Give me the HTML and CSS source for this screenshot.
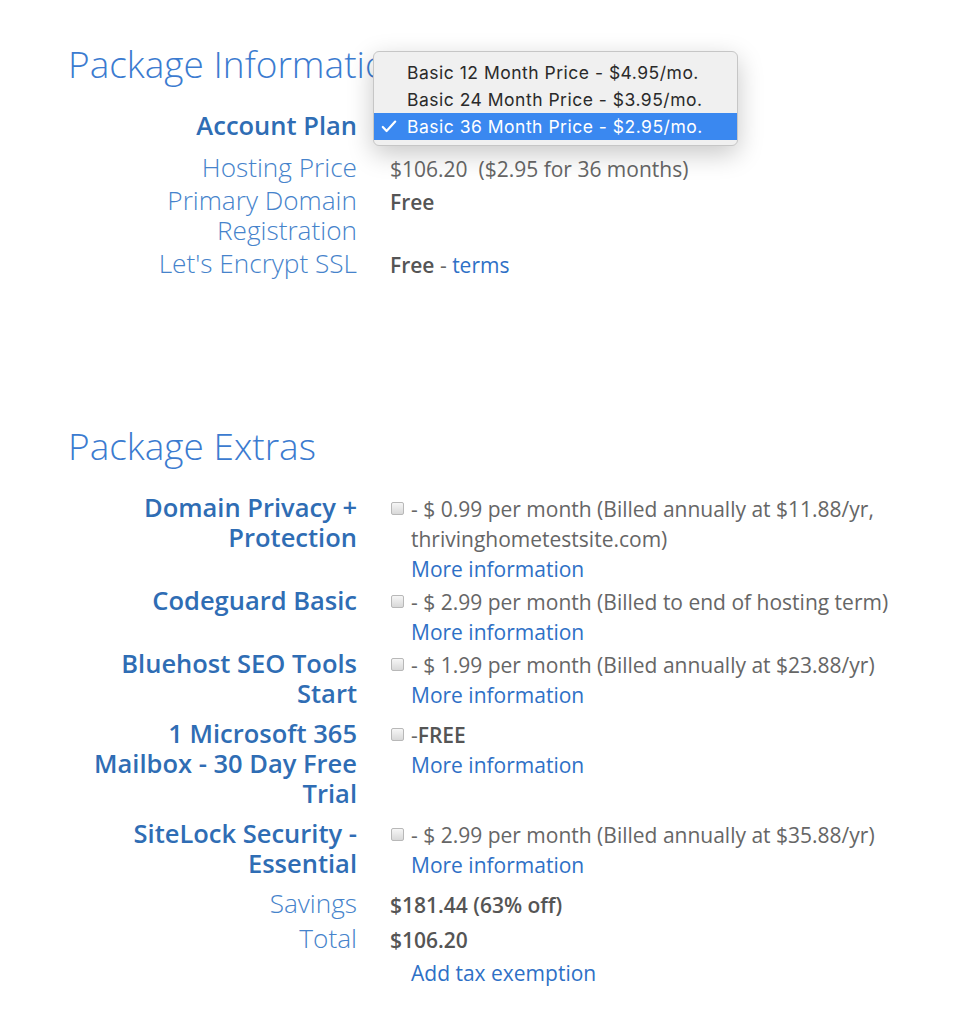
FILE: index.html
```html
<!DOCTYPE html>
<html lang="en">
<head>
  <meta charset="UTF-8" />
  <title>Package Information</title>
  <link rel="stylesheet" href="styles.css">
</head>
<body>
  <main class="page">
    <section class="pkg info">
      <h2>Package Information</h2>
      <div class="rows">
        <div class="label strong plan-label">Account Plan</div>
        <div class="value plan">
          <select>
            <option>Basic 36 Month Price - $2.95/mo.</option>
          </select>
          <!-- open native menu -->
          <div class="menu">
            <div class="item">Basic 12 Month Price - $4.95/mo.</div>
            <div class="item">Basic 24 Month Price - $3.95/mo.</div>
            <div class="item selected">
              <svg class="check" width="16" height="13" viewBox="0 0 16 13"><polyline points="1.8,7 5.6,11 14.2,1.6" fill="none" stroke="#fff" stroke-width="2.2" stroke-linecap="round" stroke-linejoin="round"/></svg>
              Basic 36 Month Price - $2.95/mo.
            </div>
          </div>
        </div>

        <div class="label">Hosting Price</div>
        <div class="value">$106.20&nbsp; ($2.95 for 36 months)</div>

        <div class="label two-line">Primary Domain Registration</div>
        <div class="value"><b>Free</b></div>

        <div class="label">Let's Encrypt SSL</div>
        <div class="value"><b>Free</b> - <a href="#">terms</a></div>
      </div>
    </section>

    <section class="pkg extras">
      <h2>Package Extras</h2>
      <div class="rows">
        <div class="label strong">Domain Privacy + Protection</div>
        <div class="value opt">
          <input type="checkbox">
          - $ 0.99 per month (Billed annually at $11.88/yr, thrivinghometestsite.com)<br>
          <a href="#">More information</a>
        </div>

        <div class="label strong">Codeguard Basic</div>
        <div class="value opt">
          <input type="checkbox">
          - $ 2.99 per month (Billed to end of hosting term)<br>
          <a href="#">More information</a>
        </div>

        <div class="label strong">Bluehost SEO Tools Start</div>
        <div class="value opt">
          <input type="checkbox">
          - $ 1.99 per month (Billed annually at $23.88/yr)<br>
          <a href="#">More information</a>
        </div>

        <div class="label strong">1 Microsoft 365 Mailbox - 30 Day Free Trial</div>
        <div class="value opt">
          <input type="checkbox">
          -<b>FREE</b><br>
          <a href="#">More information</a>
        </div>

        <div class="label strong">SiteLock Security - Essential</div>
        <div class="value opt">
          <input type="checkbox">
          - $ 2.99 per month (Billed annually at $35.88/yr)<br>
          <a href="#">More information</a>
        </div>

        <div class="label savings">Savings</div>
        <div class="value"><b>$181.44 (63% off)</b></div>

        <div class="label">Total</div>
        <div class="value"><b>$106.20</b></div>

        <div class="label">&nbsp;</div>
        <div class="value opt"><a href="#">Add tax exemption</a></div>
      </div>
    </section>
  </main>
</body>
</html>
```

FILE: styles.css
```css
body {
  margin: 0;
  font-family: "Open Sans", sans-serif;
  color: #666;
  background: #fff;
}
.page {
  padding: 42px 0 40px;
}
h2 {
  margin: 0 0 24px 68px;
  font-size: 37px;
  line-height: 44px;
  font-weight: 300;
  color: #3b7bd0;
}
.extras {
  margin-top: 144px;
}
.rows {
  display: grid;
  grid-template-columns: 272px 1fr;
  column-gap: 33px;
  row-gap: 1px;
  margin-left: 85px;
  align-items: baseline;
}
.label {
  text-align: right;
  font-size: 26.2px;
  line-height: 30px;
  font-weight: 300;
  color: #4683cb;
}
.label.strong {
  font-size: 25.5px;
  font-weight: 600;
  color: #2f6db4;
}
.label.two-line {
  padding-bottom: 2px;
}
.extras .label.strong {
  padding-bottom: 9px;
}
.plan-label {
  padding-bottom: 11px;
}
.label.savings {
  padding-bottom: 4px;
}
.value {
  font-size: 21px;
  line-height: 30px;
}
.value b {
  font-weight: 600;
  color: #555;
}
a {
  color: #2e70c6;
  text-decoration: none;
}
.opt {
  padding-left: 21px;
}
.opt input {
  float: left;
  margin: 8px 0 0 -20px;
  width: 13px;
  height: 13px;
  appearance: none;
  border: 1px solid #b8b8b8;
  border-radius: 2px;
  background: linear-gradient(#f6f6f6, #d8d8d8);
}

/* account plan select, shown open */
.plan {
  position: relative;
}
.plan select {
  font-family: Inter, sans-serif;
  font-size: 17px;
  width: 330px;
}
.menu {
  position: absolute;
  left: -17px;
  top: -61px;
  width: 363px;
  padding: 7px 0 5px;
  background: #f0f0f0;
  border: 1px solid #c6c6c6;
  border-radius: 6px;
  box-shadow: 0 8px 26px rgba(0, 0, 0, 0.22);
  font-family: Inter, sans-serif;
  font-size: 17.5px;
  letter-spacing: 0.5px;
  color: #2a2a2a;
}
.item {
  position: relative;
  height: 27px;
  line-height: 27px;
  padding-left: 33px;
  white-space: nowrap;
}
.item.selected {
  background: #3a88f0;
  color: #fff;
}
.check {
  position: absolute;
  left: 7px;
  top: 7px;
}
```
